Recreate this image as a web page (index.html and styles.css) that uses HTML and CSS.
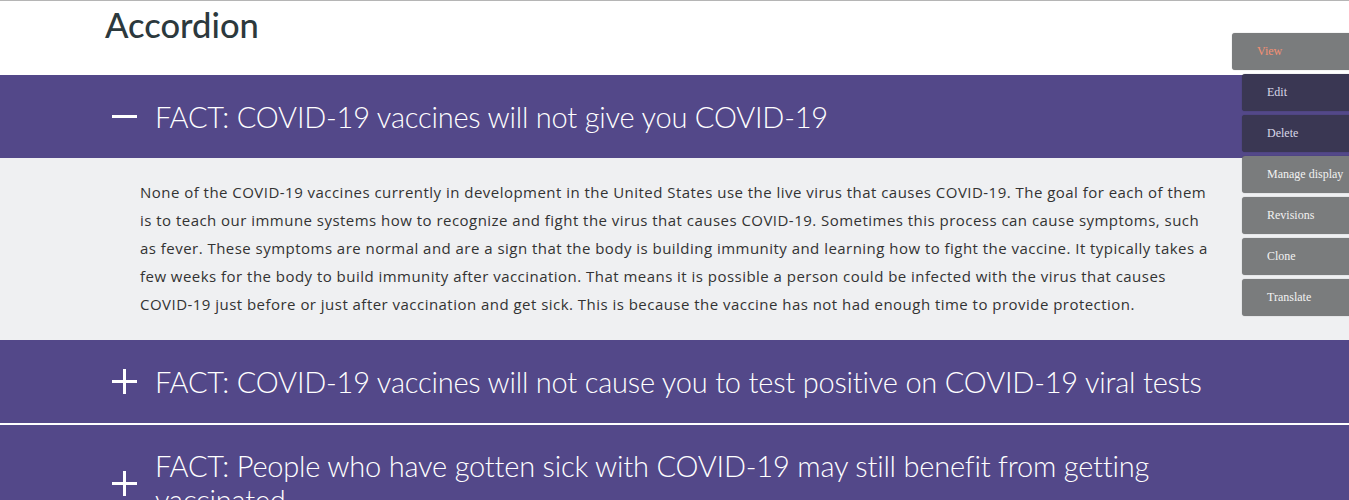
FILE: index.html
```html
<!DOCTYPE html>
<html lang="en">
<head>
<meta charset="utf-8">
<title>Accordion</title>
<link rel="stylesheet" href="styles.css">
</head>
<body>
<div class="page">
  <h1 class="page-title">Accordion</h1>
  <div class="accordion">
    <div class="acc-item open">
      <div class="acc-head">
        <span class="acc-icon minus"></span>
        <span class="acc-title">FACT: COVID-19 vaccines will not give you COVID-19</span>
      </div>
      <div class="acc-body">
        <p>None of the COVID-19 vaccines currently in development in the United States use the live virus that causes COVID-19. The goal for each of them is to teach our immune systems how to recognize and fight the virus that causes COVID-19. Sometimes this process can cause symptoms, such as fever. These symptoms are normal and are a sign that the body is building immunity and learning how to fight the vaccine. It typically takes a few weeks for the body to build immunity after vaccination. That means it is possible a person could be infected with the virus that causes COVID-19 just before or just after vaccination and get sick. This is because the vaccine has not had enough time to provide protection.</p>
      </div>
    </div>
    <div class="acc-item">
      <div class="acc-head">
        <span class="acc-icon plus"></span>
        <span class="acc-title">FACT: COVID-19 vaccines will not cause you to test positive on COVID-19 viral tests</span>
      </div>
    </div>
    <div class="acc-item">
      <div class="acc-head">
        <span class="acc-icon plus"></span>
        <span class="acc-title">FACT: People who have gotten sick with COVID-19 may still benefit from getting vaccinated</span>
      </div>
    </div>
  </div>
</div>
<nav class="tabs">
  <a class="tab tab-view">View</a>
  <a class="tab tab-dark">Edit</a>
  <a class="tab tab-dark">Delete</a>
  <a class="tab">Manage display</a>
  <a class="tab">Revisions</a>
  <a class="tab">Clone</a>
  <a class="tab">Translate</a>
</nav>
</body>
</html>
```
FILE: styles.css
```css
html, body {
  margin: 0;
  padding: 0;
  background: #ffffff;
}
body {
  font-family: "Lato", "Liberation Sans", sans-serif;
  border-top: 1px solid #b5b5b5;
  overflow: hidden;
}
.page-title {
  margin: 0;
  padding: 4px 0 0 105px;
  height: 74px;
  box-sizing: border-box;
  font-size: 34.5px;
  line-height: 40px;
  font-weight: 500;
  color: #2c393d;
}
.acc-item {
  background: #534889;
  margin-bottom: 2px;
}
.acc-item.open {
  margin-bottom: 0;
}
.acc-head {
  display: flex;
  align-items: center;
  min-height: 83px;
  box-sizing: border-box;
  padding: 24px 100px 24px 112px;
  gap: 18px;
}
.acc-title {
  color: #ffffff;
  font-weight: 300;
  font-size: 29px;
  letter-spacing: -0.2px;
  line-height: 34px;
}
.acc-icon {
  position: relative;
  flex: 0 0 25px;
  width: 25px;
  height: 25px;
}
.acc-icon::before,
.acc-icon::after {
  content: "";
  position: absolute;
  background: #ffffff;
}
.acc-icon::before {
  left: 0;
  right: 0;
  top: 11px;
  height: 3px;
}
.plus::after {
  top: 0;
  bottom: 0;
  left: 11px;
  width: 3px;
}
.acc-body {
  background: #eff0f2;
  padding: 20px 137px 22px 140px;
}
.acc-body p {
  margin: 0;
  font-family: "Open Sans", "Liberation Sans", sans-serif;
  font-size: 15px;
  letter-spacing: 0.47px;
  line-height: 28px;
  color: #333333;
}
.tabs {
  position: absolute;
  top: 33px;
  left: 1232px;
  display: flex;
  flex-direction: column;
  gap: 4px;
  font-family: "Liberation Serif", serif;
  font-size: 12px;
}
.tab {
  display: block;
  box-sizing: border-box;
  width: 130px;
  height: 37px;
  line-height: 37px;
  margin-left: 10px;
  padding-left: 25px;
  background: #7a7c7d;
  color: #f2f2f2;
  border-radius: 3px;
  box-shadow: 0 0 1px rgba(0,0,0,0.4);
}
.tab-view {
  margin-left: 0;
  color: #f49073;
}
.tab-dark {
  background: #3a3753;
  color: #d8d8e8;
}
```
